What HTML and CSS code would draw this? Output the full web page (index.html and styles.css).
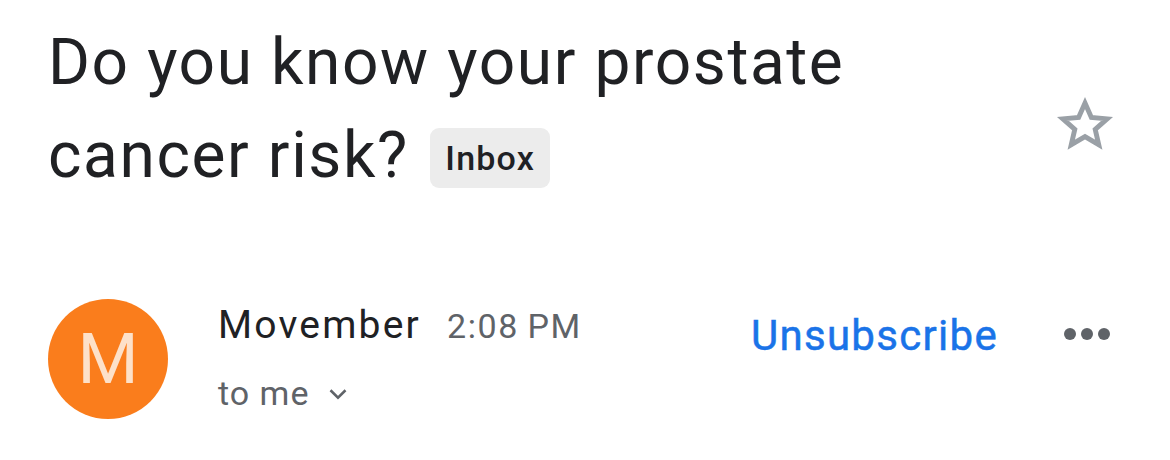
FILE: index.html
```html
<!DOCTYPE html>
<html lang="en">
<head>
<meta charset="utf-8">
<title>Do you know your prostate cancer risk?</title>
<link rel="stylesheet" href="styles.css">
</head>
<body>
<main class="mail">
  <header class="subject-row">
    <h1 class="subject"><span class="subject-text">Do you know your prostate cancer risk?</span> <span class="chip">Inbox</span></h1>
    <button class="star" aria-label="Star">
      <svg viewBox="0 0 24 24" width="62" height="62"><path d="M12 3.5l2.47 5.6 6.08.55-4.6 4.02 1.37 5.96L12 16.5l-5.32 3.13 1.37-5.96-4.6-4.02 6.08-.55z" fill="none" stroke="#9aa0a6" stroke-width="1.9" stroke-linejoin="miter"/></svg>
    </button>
  </header>
  <section class="sender-row">
    <div class="avatar">M</div>
    <div class="sender-info">
      <div class="line1"><span class="name">Movember</span><span class="time">2:08&#8201;PM</span></div>
      <div class="line2"><span class="to">to me</span>
        <svg class="chev" viewBox="0 0 24 24" width="30" height="30"><path d="M6 9l6 6 6-6" fill="none" stroke="#5f6368" stroke-width="2"/></svg>
      </div>
    </div>
    <a class="unsub" href="#">Unsubscribe</a>
    <div class="more" aria-label="More"><span></span><span></span><span></span></div>
  </section>
</main>
</body>
</html>
```
FILE: styles.css
```css
html, body {
  margin: 0;
  padding: 0;
  background: #ffffff;
}
body {
  font-family: Roboto, "Liberation Sans", sans-serif;
  color: #202124;
}
.mail {
  width: 1170px;
  height: 460px;
  box-sizing: border-box;
  padding: 16px 0 0 48px;
}
.subject-row {
  display: flex;
  align-items: flex-start;
}
.subject {
  margin: 0;
  flex: 1;
  font-weight: 400;
  font-size: 64px;
  line-height: 93px;
  letter-spacing: 1.6px;
  color: #202124;
  padding-right: 160px;
}
.chip {
  display: inline-block;
  vertical-align: 7px;
  background: #ececec;
  border-radius: 9px;
  font-size: 34px;
  font-weight: 500;
  line-height: 60px;
  height: 60px;
  padding: 0 15px;
  margin-left: 4px;
  letter-spacing: 1.2px;
}
.star {
  border: 0;
  background: none;
  padding: 0;
  margin: 78px 54px 0 0;
  width: 62px;
  height: 62px;
  display: flex;
}
.sender-row {
  display: flex;
  align-items: flex-start;
  margin-top: 97px;
}
.avatar {
  width: 120px;
  height: 120px;
  border-radius: 50%;
  background: #fa7d1c;
  color: #fde1c9;
  font-size: 70px;
  line-height: 120px;
  text-align: center;
  flex: none;
}
.sender-info {
  margin-left: 50px;
  flex: 1;
}
.line1 {
  display: flex;
  align-items: baseline;
  margin-top: 1px;
  line-height: 50px;
}
.name {
  font-size: 39px;
  letter-spacing: 2.2px;
  color: #202124;
}
.time {
  font-size: 34px;
  letter-spacing: 1.6px;
  color: #5f6368;
  margin-left: 26px;
}
.line2 {
  display: flex;
  align-items: center;
  margin-top: 20px;
  line-height: 44px;
}
.to {
  font-size: 34px;
  letter-spacing: 1px;
  color: #5f6368;
}
.chev {
  margin-left: 14px;
  margin-top: 2px;
}
.unsub {
  font-size: 42px;
  font-weight: 400;
  color: #1a73e8;
  text-decoration: none;
  line-height: 50px;
  margin-top: 12px;
  letter-spacing: 1.3px;
  -webkit-text-stroke: 0.5px #1a73e8;
}
.more {
  display: flex;
  gap: 5px;
  margin: 29px 60px 0 66px;
}
.more span {
  width: 12px;
  height: 12px;
  border-radius: 50%;
  background: #5f6368;
}
```
